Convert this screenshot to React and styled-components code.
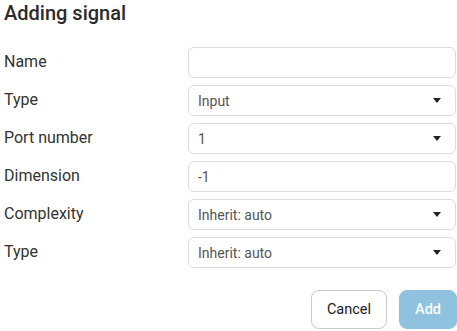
import { createGlobalStyle } from 'styled-components';
import styled from 'styled-components';

const GlobalStyle = createGlobalStyle`
  * { box-sizing: border-box; }
  body {
    margin: 0;
    background: #fff;
    font-family: Roboto, 'Liberation Sans', sans-serif;
  }
`;

const fields = [
  { label: 'Name', kind: 'input', value: '' },
  { label: 'Type', kind: 'select', value: 'Input' },
  { label: 'Port number', kind: 'select', value: '1' },
  { label: 'Dimension', kind: 'input', value: '-1' },
  { label: 'Complexity', kind: 'select', value: 'Inherit: auto' },
  { label: 'Type', kind: 'select', value: 'Inherit: auto' },
];

function Caret() {
  return (
    <svg width="8" height="5" viewBox="0 0 8 5">
      <path d="M0 0 H8 L4 5 Z" fill="#222" />
    </svg>
  );
}

export default function App() {
  return (
    <Dialog>
      <GlobalStyle />
      <Title>Adding signal</Title>
      <Form>
        {fields.map((f, i) => (
          <Row key={i}>
            <Label>{f.label}</Label>
            <Field>
              <FieldText>{f.value}</FieldText>
              {f.kind === 'select' && <Caret />}
            </Field>
          </Row>
        ))}
      </Form>
      <Footer>
        <Button>Cancel</Button>
        <Button $primary>Add</Button>
      </Footer>
    </Dialog>
  );
}

const Dialog = styled.div`
  width: 457px;
  height: 331px;
  padding: 0 1px 0 4px;
  display: flex;
  flex-direction: column;
`;

const Title = styled.h2`
  margin: 0;
  padding-top: 1px;
  height: 47px;
  font-size: 20px;
  font-weight: 500;
  color: #2b2b2b;
  line-height: 24px;
`;

const Form = styled.div`
  display: flex;
  flex-direction: column;
  gap: 7px;
`;

const Row = styled.div`
  display: grid;
  grid-template-columns: 184px 1fr;
  align-items: center;
`;

const Label = styled.div`
  font-size: 16px;
  color: #333;
  margin-top: -2px;
`;

const Field = styled.div`
  height: 31px;
  border: 1px solid #dcdcdc;
  border-radius: 6px;
  display: flex;
  align-items: center;
  justify-content: space-between;
  padding: 0 14px 0 9px;
`;

const FieldText = styled.span`
  font-size: 14px;
  color: #555;
`;

const Footer = styled.div`
  margin-top: 22px;
  margin-right: -1px;
  display: flex;
  justify-content: flex-end;
  gap: 12px;
`;

const Button = styled.button`
  height: 39px;
  padding: 0 ${(p) => (p.$primary ? '15px' : '15px')};
  border-radius: 8px;
  font-family: Roboto, 'Liberation Sans', sans-serif;
  font-size: 14.5px;
  border: 1px solid ${(p) => (p.$primary ? '#8ec2de' : '#c8c8c8')};
  background: ${(p) => (p.$primary ? '#8ec2de' : '#fff')};
  color: ${(p) => (p.$primary ? '#fff' : '#1a1a1a')};
  font-weight: ${(p) => (p.$primary ? 500 : 400)};
`;
